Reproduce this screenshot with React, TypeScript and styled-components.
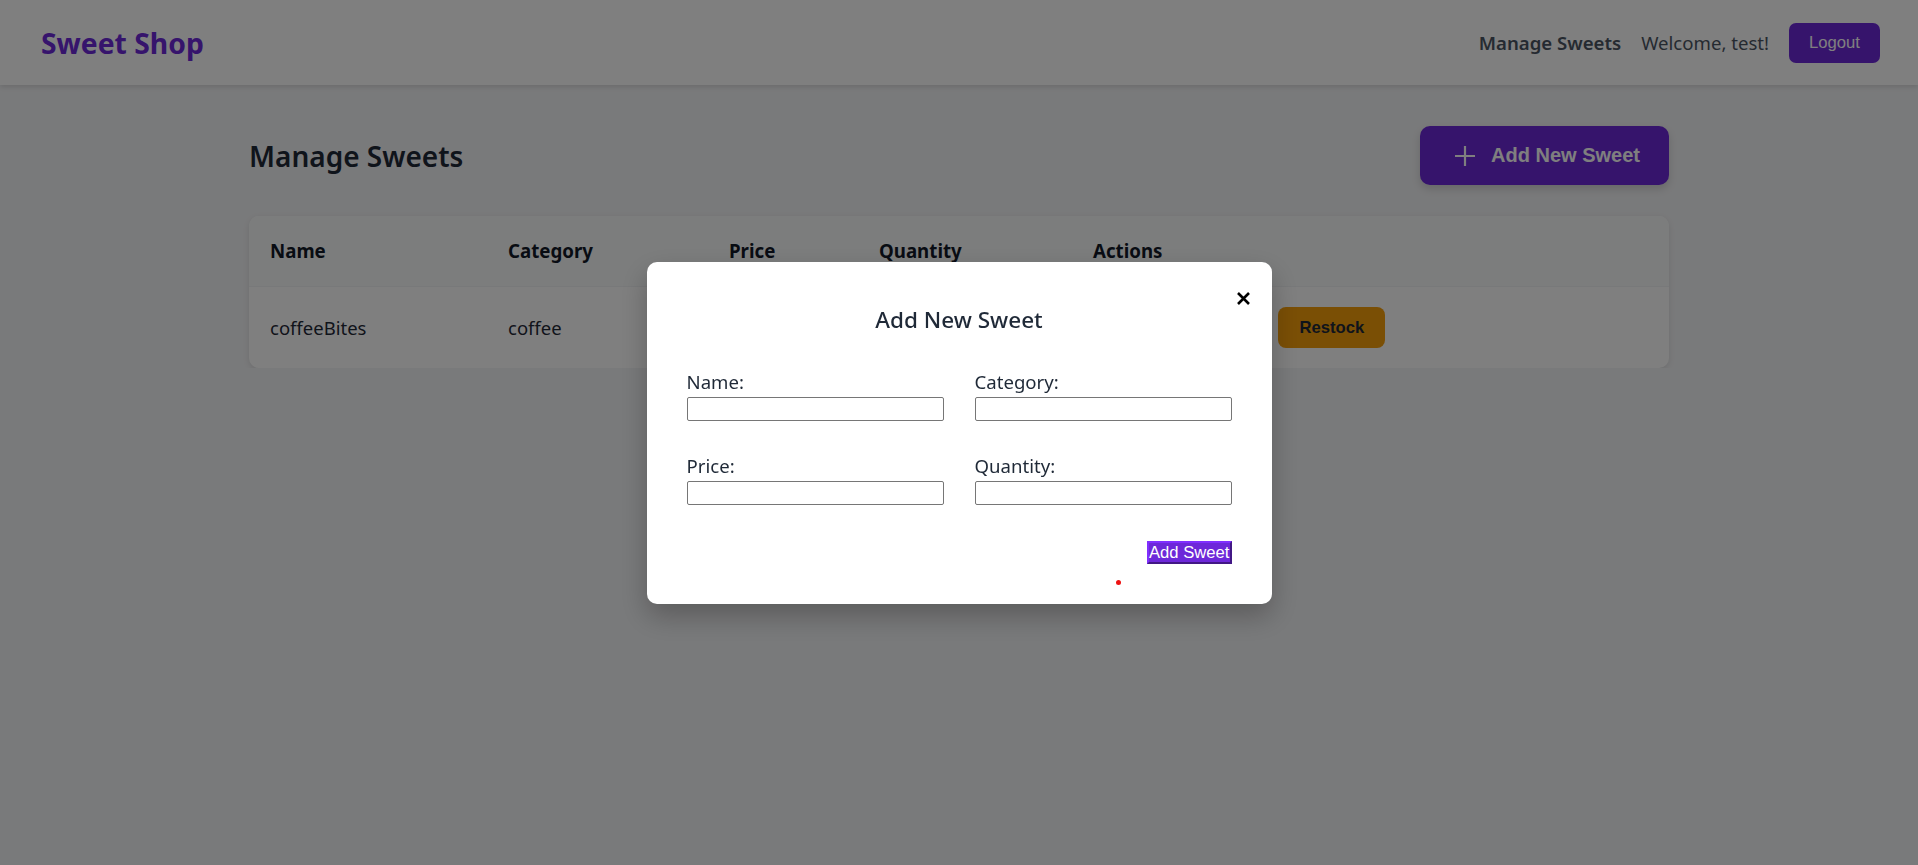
import React from 'react'
import styled, { createGlobalStyle } from 'styled-components'

const GlobalStyle = createGlobalStyle`
  body {
    margin: 0;
    background: #f3f4f6;
    font-family: "Segoe UI", "Noto Sans", sans-serif;
    color: #1f2937;
  }
`

const ButtonFont = `"Liberation Sans", Arial, sans-serif`

const Header = styled.header`
  height: 85px;
  background: #ffffff;
  box-shadow: 0 2px 5px rgba(0, 0, 0, 0.12);
  display: flex;
  align-items: center;
  justify-content: space-between;
  padding: 0 38px 0 41px;
`

const Logo = styled.div`
  font-size: 28.3px;
  font-weight: 700;
  color: #6d28d9;
`

const Nav = styled.nav`
  display: flex;
  align-items: center;
  gap: 20px;
  font-size: 18.6px;
  color: #4b5563;
`

const NavLink = styled.span`
  font-weight: 600;
`

const LogoutButton = styled.button`
  font-family: ${ButtonFont};
  font-size: 16.67px;
  background: #6d28d9;
  color: #ffffff;
  border: none;
  border-radius: 7px;
  height: 40px;
  padding: 0 20px;
`

const Main = styled.main`
  width: 1420px;
  margin: 0 auto;
  padding-top: 41px;
`

const TitleRow = styled.div`
  display: flex;
  align-items: center;
  justify-content: space-between;
  margin-bottom: 31px;
`

const PageTitle = styled.h1`
  margin: 0;
  font-size: 28px;
  font-weight: 600;
  color: #1f2937;
`

const AddButton = styled.button`
  font-family: ${ButtonFont};
  display: flex;
  align-items: center;
  gap: 16px;
  height: 59px;
  padding: 0 29px 0 35px;
  background: #6d28d9;
  color: #ffffff;
  border: none;
  border-radius: 10px;
  font-size: 20px;
  font-weight: 700;
  box-shadow: 0 4px 8px rgba(0, 0, 0, 0.15);
`

const Card = styled.div`
  background: #ffffff;
  border-radius: 10px;
  box-shadow: 0 2px 6px rgba(0, 0, 0, 0.1);
  overflow: hidden;
`

const Table = styled.table`
  width: 100%;
  border-collapse: collapse;
  table-layout: fixed;
`

const Th = styled.th<{ $w?: number }>`
  box-sizing: border-box;
  width: ${({ $w }) => ($w ? `${$w}px` : 'auto')};
  text-align: left;
  padding: 20px 21px;
  font-size: 18.7px;
  line-height: 30px;
  font-weight: 700;
  color: #111827;
  background: #f9fafb;
`

const Td = styled.td`
  padding: 20px 21px;
  font-size: 18.5px;
  line-height: 30px;
  color: #1f2937;
  border-top: 1px solid #f1f2f4;
`

const Actions = styled.div`
  display: flex;
  gap: 10px;
`

const ActionButton = styled.button<{ $bg: string; $fg: string }>`
  font-family: ${ButtonFont};
  font-size: 16.67px;
  font-weight: 700;
  height: 41px;
  padding: 0 21px;
  border: none;
  border-radius: 8px;
  background: ${({ $bg }) => $bg};
  color: ${({ $fg }) => $fg};
`

const Overlay = styled.div`
  position: fixed;
  inset: 0;
  background: rgba(0, 0, 0, 0.5);
  display: flex;
  align-items: center;
  justify-content: center;
`

const Modal = styled.div`
  position: relative;
  width: 625px;
  box-sizing: border-box;
  padding: 40px;
  background: #ffffff;
  border-radius: 10px;
  box-shadow: 0 12px 28px rgba(0, 0, 0, 0.25);
`

const CloseButton = styled.button`
  position: absolute;
  top: 26px;
  right: 18px;
  width: 21px;
  height: 21px;
  padding: 4px;
  border: none;
  background: none;
  display: flex;
`

const ModalTitle = styled.h2`
  margin: 0 0 29px;
  text-align: center;
  font-size: 22.5px;
  line-height: 36px;
  font-weight: 500;
  color: #1f2937;
`

const FormGrid = styled.div`
  display: grid;
  grid-template-columns: 1fr 1fr;
  column-gap: 31px;
  row-gap: 30px;
`

const Field = styled.div`
  display: flex;
  flex-direction: column;
`

const Label = styled.label`
  font-size: 18.6px;
  line-height: 30px;
  color: #1f2937;
`

const Input = styled.input`
  height: 24px;
  box-sizing: border-box;
  border: 1px solid #767676;
  border-radius: 2px;
  padding: 1px 2px;
`

const FormFooter = styled.div`
  display: flex;
  justify-content: flex-end;
  margin-top: 36px;
`

const SubmitButton = styled.button`
  font-family: ${ButtonFont};
  font-size: 16.67px;
  height: 23px;
  padding: 0;
  line-height: 19px;
  color: #ffffff;
  background: #6d28d9;
  border: 2px outset #6d28d9;
`

const CursorDot = styled.span`
  position: absolute;
  left: 469px;
  top: 318px;
  width: 5px;
  height: 5px;
  border-radius: 50%;
  background: #ee1111;
`

const PlusIcon = () => (
  <svg width="20" height="20" viewBox="0 0 20 20">
    <path d="M10 0v20M0 10h20" stroke="currentColor" strokeWidth="2.2" />
  </svg>
)

const CloseIcon = () => (
  <svg width="13" height="13" viewBox="0 0 13 13">
    <path d="M1 1l11 11M12 1L1 12" stroke="#000" strokeWidth="2.6" />
  </svg>
)

const fields = ['Name', 'Category', 'Price', 'Quantity']

const App = () => {
  return (
    <>
      <GlobalStyle />
      <Header>
        <Logo>Sweet Shop</Logo>
        <Nav>
          <NavLink>Manage Sweets</NavLink>
          <span>Welcome, test!</span>
          <LogoutButton>Logout</LogoutButton>
        </Nav>
      </Header>

      <Main>
        <TitleRow>
          <PageTitle>Manage Sweets</PageTitle>
          <AddButton>
            <PlusIcon />
            Add New Sweet
          </AddButton>
        </TitleRow>

        <Card>
          <Table>
            <thead>
              <tr>
                <Th $w={238}>Name</Th>
                <Th $w={221}>Category</Th>
                <Th $w={150}>Price</Th>
                <Th $w={214}>Quantity</Th>
                <Th>Actions</Th>
              </tr>
            </thead>
            <tbody>
              <tr>
                <Td>coffeeBites</Td>
                <Td>coffee</Td>
                <Td />
                <Td />
                <Td>
                  <Actions>
                    <ActionButton $bg="#3b82f6" $fg="#ffffff">Edit</ActionButton>
                    <ActionButton $bg="#ef4444" $fg="#ffffff">Delete</ActionButton>
                    <ActionButton $bg="#f59e0b" $fg="#1f2937">Restock</ActionButton>
                  </Actions>
                </Td>
              </tr>
            </tbody>
          </Table>
        </Card>
      </Main>

      <Overlay>
        <Modal>
          <CloseButton aria-label="Close">
            <CloseIcon />
          </CloseButton>
          <ModalTitle>Add New Sweet</ModalTitle>
          <FormGrid>
            {fields.map((f) => (
              <Field key={f}>
                <Label>{f}:</Label>
                <Input />
              </Field>
            ))}
          </FormGrid>
          <FormFooter>
            <SubmitButton>Add Sweet</SubmitButton>
          </FormFooter>
          <CursorDot />
        </Modal>
      </Overlay>
    </>
  )
}

export default App
